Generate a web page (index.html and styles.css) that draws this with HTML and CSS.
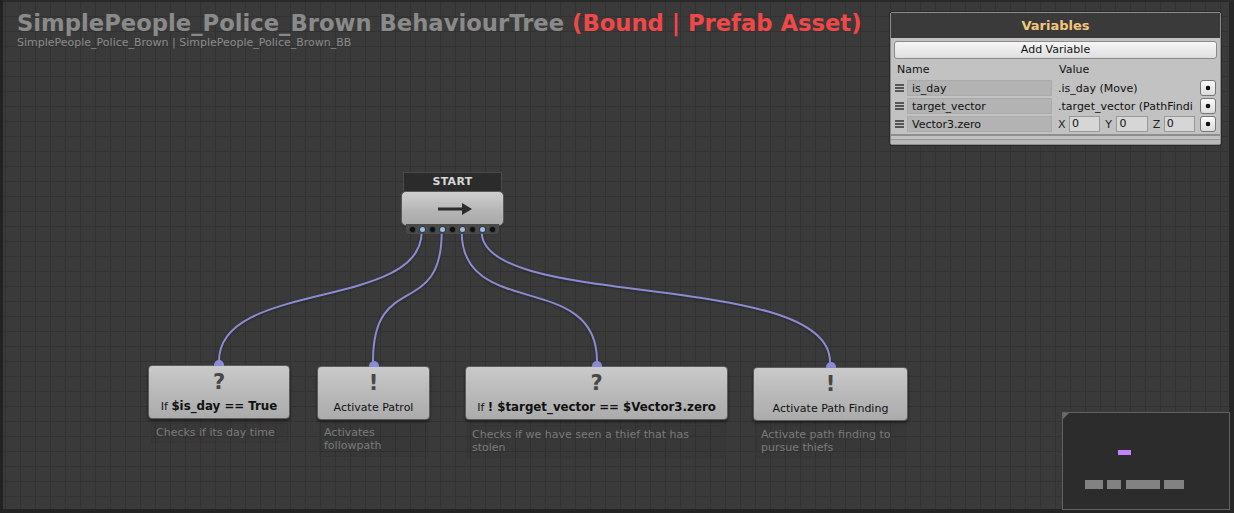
FILE: index.html
```html
<!DOCTYPE html>
<html>
<head>
<meta charset="utf-8">
<link rel="stylesheet" href="styles.css">
</head>
<body>
<div class="editor">
  <header class="heading">
    <div class="title">SimplePeople_Police_Brown BehaviourTree <span class="bound">(Bound | Prefab Asset)</span></div>
    <div class="subtitle">SimplePeople_Police_Brown | SimplePeople_Police_Brown_BB</div>
  </header>

  <svg class="wires" width="1234" height="513" viewBox="0 0 1234 513">
    <g fill="none" stroke="#8b8bd4" stroke-width="2" stroke-linecap="round">
      <path d="M421.7 232 C421.7 310, 219 280, 219 361"/>
      <path d="M441.7 232 C441.7 320, 373 270, 373 361"/>
      <path d="M461.7 232 C461.7 320, 597 270, 597 361"/>
      <path d="M481.7 232 C481.7 310, 830 270, 830 362"/>
    </g>
  </svg>

  <div class="start">
    <div class="start-label">START</div>
    <div class="start-body">
      <svg class="arrow" width="34" height="12" viewBox="0 0 34 12"><path d="M0 4.5 H24 V0 L34 6 L24 12 V7.5 H0 Z" fill="#2c2c2c"/></svg>
    </div>
    <div class="ports">
      <span class="dot"></span><span class="dot on"></span><span class="dot"></span><span class="dot on"></span><span class="dot"></span><span class="dot on"></span><span class="dot"></span><span class="dot on"></span><span class="dot"></span>
    </div>
  </div>

  <div class="node n1">
    <span class="inport"></span>
    <div class="icon">?</div>
    <div class="label">If <b>$is_day == True</b></div>
  </div>
  <div class="comment c1">Checks if its day time</div>

  <div class="node n2">
    <span class="inport"></span>
    <div class="icon">!</div>
    <div class="label">Activate Patrol</div>
  </div>
  <div class="comment c2">Activates<br>followpath</div>

  <div class="node n3">
    <span class="inport"></span>
    <div class="icon">?</div>
    <div class="label">If <b>! $target_vector == $Vector3.zero</b></div>
  </div>
  <div class="comment c3">Checks if we have seen a thief that has<br>stolen</div>

  <div class="node n4">
    <span class="inport"></span>
    <div class="icon">!</div>
    <div class="label">Activate Path Finding</div>
  </div>
  <div class="comment c4">Activate path finding to<br>pursue thiefs</div>

  <div class="vars">
    <div class="vars-head">Variables</div>
    <div class="vars-body">
      <div class="add-btn">Add Variable</div>
      <div class="vars-cols"><span class="col-name">Name</span><span class="col-value">Value</span></div>
      <div class="var-row">
        <span class="grip"></span>
        <span class="field name">is_day</span>
        <span class="value">.is_day (Move)</span>
        <span class="pick"></span>
      </div>
      <div class="var-row">
        <span class="grip"></span>
        <span class="field name">target_vector</span>
        <span class="value">.target_vector (PathFindi</span>
        <span class="pick"></span>
      </div>
      <div class="var-row">
        <span class="grip"></span>
        <span class="field name">Vector3.zero</span>
        <span class="value vec">
          <span class="axis">X</span><span class="num">0</span>
          <span class="axis">Y</span><span class="num">0</span>
          <span class="axis">Z</span><span class="num">0</span>
        </span>
        <span class="pick"></span>
      </div>
    </div>
    <div class="vars-foot"></div>
  </div>

  <div class="minimap">
    <span class="corner"></span>
    <span class="mm-start"></span>
    <div class="mm-row">
      <span class="mm-node w1"></span><span class="mm-node w2"></span><span class="mm-node w3"></span><span class="mm-node w4"></span>
    </div>
  </div>
</div>
</body>
</html>
```

FILE: styles.css
```css
html, body {
  margin: 0;
  padding: 0;
  background: #222;
}
body {
  font-family: "DejaVu Sans", Verdana, sans-serif;
}
.editor {
  position: relative;
  width: 1234px;
  height: 513px;
  overflow: hidden;
  background-color: #3a3a3a;
  background-image:
    linear-gradient(to right, #323232 1px, transparent 1px),
    linear-gradient(to bottom, #323232 1px, transparent 1px);
  background-size: 15px 15px;
  background-position: 5px 1px;
  box-shadow: inset 3px 0 #222, inset 0 2px #2a2a2a, inset -5px 0 #262626, inset 0 -4px #232323;
}

.heading {
  padding: 10px 0 0 17px;
}
.title {
  font-weight: bold;
  font-size: 22.7px;
  line-height: 26px;
  color: #8a8a8a;
  white-space: nowrap;
}
.bound {
  color: #f04848;
}
.subtitle {
  margin-top: 0;
  font-size: 11px;
  line-height: 13px;
  color: #8a8a8a;
  white-space: nowrap;
}

.wires {
  position: absolute;
  left: 0;
  top: 0;
  filter: drop-shadow(0 1px 1px rgba(0,0,0,0.35));
}

/* START node */
.start {
  position: absolute;
  left: 401px;
  top: 172px;
  width: 103px;
  display: flex;
  flex-direction: column;
  align-items: center;
}
.start-label {
  width: 97px;
  height: 18px;
  background: #2b2b2b;
  border: 1px solid #4a4a4a;
  border-bottom: none;
  color: #d8d8d8;
  font-size: 11px;
  font-weight: bold;
  line-height: 18px;
  text-align: center;
  letter-spacing: 0.3px;
}
.start-body {
  box-sizing: border-box;
  width: 103px;
  height: 35px;
  border-radius: 5px;
  border: 1px solid #5a5a5a;
  background: linear-gradient(#cfcfcf, #b4b4b4 60%, #a9a9a9);
  box-shadow: 0 1px 0 #2a2a2a;
  display: flex;
  align-items: center;
  justify-content: center;
}
.arrow {
  display: block;
  margin-left: 4px;
}
.ports {
  margin-top: -2px;
  width: 93px;
  height: 10px;
  border-radius: 0 0 4px 4px;
  background: #4a4a4a;
  display: flex;
  align-items: center;
  justify-content: center;
  gap: 5px;
}
.dot {
  width: 5px;
  height: 5px;
  border-radius: 50%;
  background: #111;
  box-shadow: 0 0 0 1px #3b3b3b;
}
.dot.on {
  background: #9cbce8;
}

/* child nodes */
.node {
  position: absolute;
  box-sizing: border-box;
  height: 54px;
  border-radius: 4px;
  border: 1px solid #5c5c5c;
  background: linear-gradient(#cacaca, #b9b9b9 50%, #ababab);
  box-shadow: 0 2px 3px rgba(0,0,0,0.45);
  display: flex;
  flex-direction: column;
  align-items: center;
  color: #111;
}
.inport {
  position: absolute;
  left: 50%;
  top: -6px;
  width: 10px;
  height: 6px;
  margin-left: -5px;
  border-radius: 5px 5px 0 0;
  background: #8b8bd4;
}
.icon {
  margin-top: 4px;
  height: 24px;
  font-size: 21px;
  line-height: 24px;
  font-weight: bold;
  color: #474747;
}
.label {
  margin-top: 6px;
  font-size: 11px;
  line-height: 13px;
  white-space: nowrap;
}
.label b {
  font-weight: bold;
  font-size: 11.8px;
}
.n1 { left: 148px; top: 365px; width: 142px; }
.n2 { left: 317px; top: 366px; width: 113px; }
.n3 { left: 465px; top: 366px; width: 263px; }
.n4 { left: 753px; top: 367px; width: 155px; }

.comment {
  position: absolute;
  box-sizing: border-box;
  padding: 2px 4px;
  font-size: 11px;
  line-height: 13px;
  color: #7b7b7b;
  border: 1px solid #353535;
  background: rgba(0,0,0,0.03);
  white-space: nowrap;
}
.c1 { left: 151px; top: 423px; width: 137px; height: 20px; }
.c2 { left: 319px; top: 423px; width: 109px; height: 34px; }
.c3 { left: 467px; top: 425px; width: 259px; height: 33px; }
.c4 { left: 756px; top: 425px; width: 150px; height: 33px; }

/* variables panel */
.vars {
  position: absolute;
  left: 890px;
  top: 12px;
  width: 331px;
  height: 133px;
  box-sizing: border-box;
  border: 1px solid #8c8c8c;
  border-radius: 2px;
  background: #c2c2c2;
  display: flex;
  flex-direction: column;
  box-shadow: 0 0 0 1px #2a2a2a;
}
.vars-head {
  height: 25px;
  background: #3a3a3a;
  color: #f3c87c;
  font-weight: bold;
  font-size: 13px;
  line-height: 25px;
  text-align: center;
}
.vars-body {
  flex: 1;
  padding: 3px 3px 0 3px;
  font-size: 11px;
  color: #111;
}
.add-btn {
  height: 16px;
  border: 1px solid #8a8a8a;
  border-radius: 3px;
  background: linear-gradient(#f6f6f6, #dedede);
  text-align: center;
  line-height: 16px;
}
.vars-cols {
  display: flex;
  height: 21px;
  line-height: 21px;
  padding-left: 3px;
}
.col-name { width: 162px; }
.var-row {
  display: flex;
  align-items: center;
  height: 16px;
  margin-bottom: 2px;
}
.grip {
  width: 9px;
  height: 8px;
  margin: 0 3px 0 1px;
  background: repeating-linear-gradient(#555 0 2px, transparent 2px 3px);
}
.field.name {
  box-sizing: border-box;
  width: 145px;
  height: 16px;
  line-height: 15px;
  padding-left: 4px;
  background: #b3b3b3;
  border: 1px solid #aaaaaa;
  border-radius: 1px;
}
.value {
  width: 142px;
  margin-left: 6px;
  white-space: nowrap;
}
.vec {
  display: flex;
  align-items: center;
}
.axis {
  width: 10px;
  margin-right: 2px;
  color: #222;
}
.num {
  box-sizing: border-box;
  width: 34px;
  height: 16px;
  line-height: 14px;
  padding-left: 2px;
  margin-right: 5px;
  background: #d6d6d6;
  border: 1px solid #999;
}
.pick {
  box-sizing: border-box;
  width: 16px;
  height: 16px;
  margin-left: auto;
  margin-right: 1px;
  border: 1px solid #777;
  border-radius: 3px;
  background: radial-gradient(circle, #111 0 2px, transparent 2.6px), linear-gradient(#fafafa, #dcdcdc);
}
.vars-foot {
  height: 8px;
  border-top: 2px solid #8e8e8e;
  background: linear-gradient(#c2c2c2 0 3px, #9a9a9a 3px 4px, #b8b8b8 4px);
}

/* minimap */
.minimap {
  position: absolute;
  left: 1062px;
  top: 412px;
  width: 168px;
  height: 98px;
  box-sizing: border-box;
  border: 1px solid #626262;
  background: #2c2c2c;
}
.corner {
  position: absolute;
  left: 0;
  top: 0;
  width: 0;
  height: 0;
  border-top: 6px solid #6a6a6a;
  border-right: 6px solid transparent;
}
.mm-start {
  position: absolute;
  left: 55px;
  top: 37px;
  width: 13px;
  height: 5px;
  background: #c583ff;
}
.mm-row {
  position: absolute;
  left: 22px;
  top: 67px;
  display: flex;
}
.mm-node {
  height: 9px;
  background: #828282;
}
.w1 { width: 18px; margin-right: 4px; }
.w2 { width: 14px; margin-right: 5px; }
.w3 { width: 34px; margin-right: 4px; }
.w4 { width: 20px; }
```
